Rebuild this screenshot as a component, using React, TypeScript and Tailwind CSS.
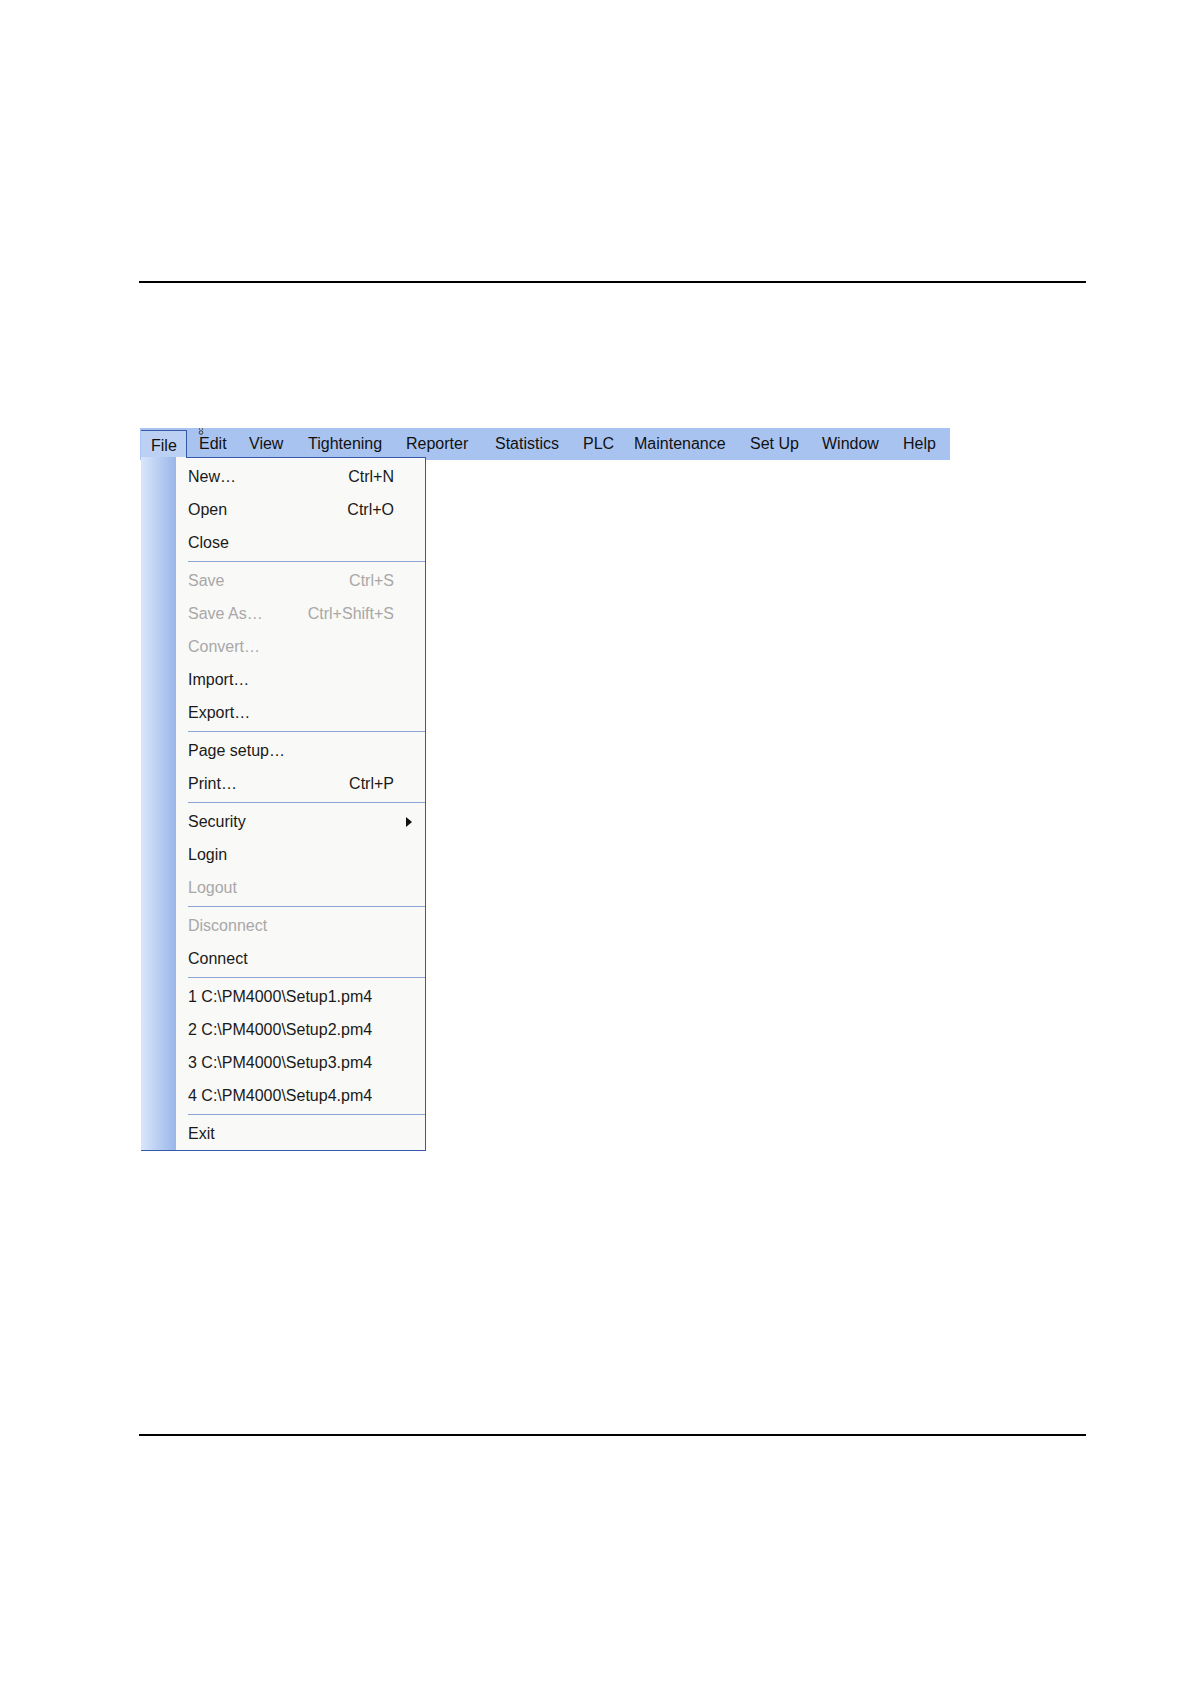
type Entry =
  | { kind: 'item'; label: string; shortcut?: string; disabled?: boolean; submenu?: boolean }
  | { kind: 'sep' };

const menuBar = [
  { label: 'File', cls: 'w-[46px] pl-[10px]' },
  { label: 'Edit', cls: 'w-[52px] pl-[12px]' },
  { label: 'View', cls: 'w-[59px] pl-[10px]' },
  { label: 'Tightening', cls: 'w-[98px] pl-[10px]' },
  { label: 'Reporter', cls: 'w-[89px] pl-[10px]' },
  { label: 'Statistics', cls: 'w-[88px] pl-[10px]' },
  { label: 'PLC', cls: 'w-[51px] pl-[10px]' },
  { label: 'Maintenance', cls: 'w-[116px] pl-[10px]' },
  { label: 'Set Up', cls: 'w-[72px] pl-[10px]' },
  { label: 'Window', cls: 'w-[81px] pl-[10px]' },
  { label: 'Help', cls: 'w-[57px] pl-[10px]' },
];

const fileMenu: Entry[] = [
  { kind: 'item', label: 'New…', shortcut: 'Ctrl+N' },
  { kind: 'item', label: 'Open', shortcut: 'Ctrl+O' },
  { kind: 'item', label: 'Close' },
  { kind: 'sep' },
  { kind: 'item', label: 'Save', shortcut: 'Ctrl+S', disabled: true },
  { kind: 'item', label: 'Save As…', shortcut: 'Ctrl+Shift+S', disabled: true },
  { kind: 'item', label: 'Convert…', disabled: true },
  { kind: 'item', label: 'Import…' },
  { kind: 'item', label: 'Export…' },
  { kind: 'sep' },
  { kind: 'item', label: 'Page setup…' },
  { kind: 'item', label: 'Print…', shortcut: 'Ctrl+P' },
  { kind: 'sep' },
  { kind: 'item', label: 'Security', submenu: true },
  { kind: 'item', label: 'Login' },
  { kind: 'item', label: 'Logout', disabled: true },
  { kind: 'sep' },
  { kind: 'item', label: 'Disconnect', disabled: true },
  { kind: 'item', label: 'Connect' },
  { kind: 'sep' },
  { kind: 'item', label: '1 C:\\PM4000\\Setup1.pm4' },
  { kind: 'item', label: '2 C:\\PM4000\\Setup2.pm4' },
  { kind: 'item', label: '3 C:\\PM4000\\Setup3.pm4' },
  { kind: 'item', label: '4 C:\\PM4000\\Setup4.pm4' },
  { kind: 'sep' },
  { kind: 'item', label: 'Exit' },
];

function MenuRow({ entry }: { entry: Entry }) {
  if (entry.kind === 'sep') {
    return (
      <div className="h-[5px] flex items-center pl-[12px]">
        <div className="flex-1 h-px bg-[#8ca4d4]" />
      </div>
    );
  }
  const color = entry.disabled ? 'text-[#a8a8a8]' : 'text-[#1a1a1a]';
  return (
    <div
      className={`h-[33px] flex items-center justify-between pl-[12px] ${
        entry.submenu ? 'pr-[13px]' : 'pr-[31px]'
      } ${color}`}
    >
      <span className="whitespace-pre">{entry.label}</span>
      {entry.shortcut && <span>{entry.shortcut}</span>}
      {entry.submenu && (
        <svg width="6" height="10" viewBox="0 0 6 10">
          <path d="M0 0 L6 5 L0 10 Z" fill="#111" />
        </svg>
      )}
    </div>
  );
}

export default function App() {
  return (
    <div className="w-[1191px] h-[1683px] bg-white overflow-hidden font-['Liberation_Sans',Arial,sans-serif] text-[16px]">
      <div className="pt-[281px] pl-[139px]">
        <div className="w-[947px] h-[2px] bg-black" />
      </div>

      {/* menu bar */}
      <div className="mt-[145px] ml-[140px] relative w-[810px] h-[32px] bg-[#a9c3f0] flex pl-[1px] text-[#111]">
        {menuBar.map((m, i) =>
          i === 0 ? (
            <div
              key={m.label}
              className={`${m.cls} mt-[2px] flex items-center bg-[#bcd0f4] border-t border-r border-[#3558a8]`}
            >
              {m.label}
            </div>
          ) : (
            <div key={m.label} className={`${m.cls} flex items-center`}>
              {m.label}
            </div>
          )
        )}

        {/* cursor remnant */}
        <svg className="absolute left-[58px] top-[0px]" width="6" height="7" viewBox="0 0 6 7">
          <circle cx="3" cy="4.5" r="1.8" fill="none" stroke="#333" strokeWidth="1" />
          <circle cx="1.5" cy="1" r="0.7" fill="#333" />
          <circle cx="4.5" cy="1" r="0.7" fill="#333" />
        </svg>

        {/* File dropdown */}
        <div className="absolute left-[1px] top-[29px] w-[285px] flex bg-[#f9f9f7] border-r border-b border-[#3558a8]">
          <div className="w-[35px] bg-linear-to-r from-[#dae6fa] to-[#9ab6e9]" />
          <div className="flex-1 flex flex-col">
            <div className="h-px ml-[10px] bg-[#3558a8]" />
            <div className="pt-[2px]">
              {fileMenu.map((e, i) => (
                <MenuRow key={i} entry={e} />
              ))}
            </div>
          </div>
        </div>
      </div>

      <div className="mt-[974px] ml-[139px] w-[947px] h-[2px] bg-black" />
    </div>
  );
}
